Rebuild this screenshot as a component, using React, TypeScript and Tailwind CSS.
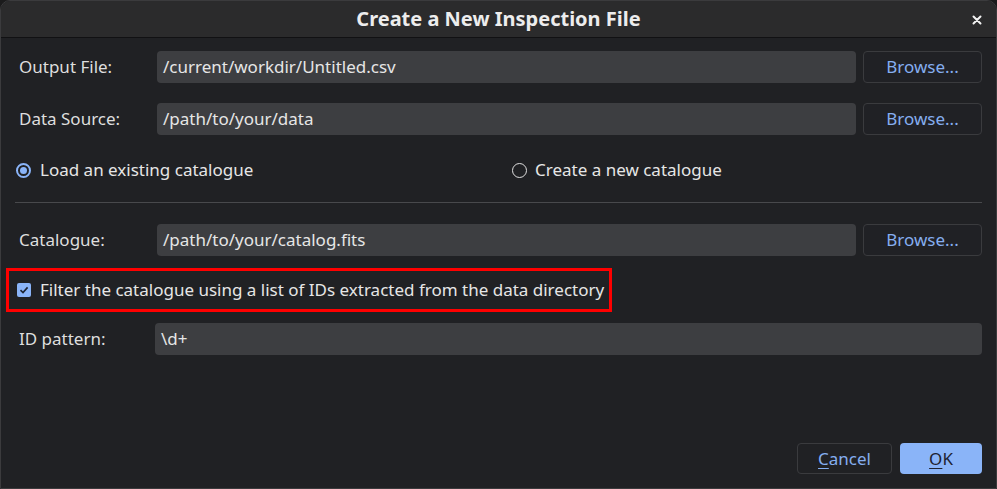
import React from "react";

const font = { fontFamily: '"Noto Sans", "Open Sans", sans-serif' };

function PathField({ label, value, browse = true, inputLeft = "ml-[138px]" }: { label: string; value: string; browse?: boolean; inputLeft?: string }) {
  return (
    <div className="flex items-center h-[32px]">
      <div className="w-0 whitespace-nowrap pl-[4px] text-[17px] text-[#dedede]">{label}</div>
      <div className={`${inputLeft} flex-1 h-[32px] rounded-[4px] bg-[#3d3e41] flex items-center px-[6px] text-[17px] text-[#e6e6e6]`}>{value}</div>
      {browse && (
        <button className="ml-[7px] w-[119px] h-[32px] rounded-[4px] border border-[#3a3b3e] bg-[#202125] text-[17px] text-[#85aef0]">Browse...</button>
      )}
    </div>
  );
}

export default function App() {
  return (
    <div style={font} className="w-[997px] h-[489px] bg-[#1b1b1c]">
      <div className="w-full h-full flex flex-col rounded-t-[10px] border border-[#3b3b3d] overflow-hidden bg-[#202124]">
        <div className="relative h-[37px] shrink-0 bg-[#2b2b2c] border-b border-[#111113] flex items-center justify-center">
          <span className="text-[20px] font-bold text-[#ededed]">Create a New Inspection File</span>
          <svg className="absolute right-[14px] top-[14px]" width="10" height="10" viewBox="0 0 10 10">
            <path d="M1.5 1.5 L8.5 8.5 M8.5 1.5 L1.5 8.5" stroke="#f2f2f2" strokeWidth="2" strokeLinecap="round" />
          </svg>
        </div>
        <div className="flex-1 flex flex-col px-[14px] pb-[14px]">
          <div className="mt-[13px]">
            <PathField label="Output File:" value="/current/workdir/Untitled.csv" />
          </div>
          <div className="mt-[20px]">
            <PathField label="Data Source:" value="/path/to/your/data" />
          </div>
          <div className="mt-[23px] h-[24px] flex items-center text-[17px] text-[#e6e6e6]">
            <div className="flex items-center w-[497px]">
              <span className="w-[15px] h-[15px] ml-[1px] rounded-full border-2 border-[#8ab4f8] flex items-center justify-center">
                <span className="w-[7px] h-[7px] rounded-full bg-[#8ab4f8]" />
              </span>
              <span className="ml-[9px]">Load an existing catalogue</span>
            </div>
            <div className="flex items-center">
              <span className="w-[15px] h-[15px] rounded-full border-[1.5px] border-[#e0e0e0]" />
              <span className="ml-[8px]">Create a new catalogue</span>
            </div>
          </div>
          <div className="mt-[20px] h-[1px] bg-[#48494c]" />
          <div className="mt-[21px]">
            <PathField label="Catalogue:" value="/path/to/your/catalog.fits" />
          </div>
          <div className="mt-[12px] -ml-[9px] w-[606px] h-[44px] border-[3px] border-[#ff0000] flex items-center pl-[8px]">
            <span className="w-[14px] h-[14px] rounded-[2px] bg-[#8ab4f8] flex items-center justify-center">
              <svg width="10" height="10" viewBox="0 0 10 10">
                <path d="M1.5 5.2 L4 7.6 L8.6 2.4" fill="none" stroke="#1d2330" strokeWidth="1.6" />
              </svg>
            </span>
            <span className="ml-[9px] text-[17px] text-[#e6e6e6] whitespace-nowrap">Filter the catalogue using a list of IDs extracted from the data directory</span>
          </div>
          <div className="mt-[11px]">
            <PathField label="ID pattern:" value="\d+" browse={false} inputLeft="ml-[136px]" />
          </div>
          <div className="mt-auto flex justify-end gap-[8px]">
            <button className="w-[95px] h-[31px] rounded-[4px] border border-[#3a3b3e] text-[17px] text-[#85aef0]">
              <span className="underline underline-offset-[3px]">C</span>ancel
            </button>
            <button className="w-[82px] h-[31px] rounded-[4px] bg-[#8ab4f8] text-[17px] text-[#1e2230]">
              <span className="underline underline-offset-[3px]">O</span>K
            </button>
          </div>
        </div>
      </div>
    </div>
  );
}
